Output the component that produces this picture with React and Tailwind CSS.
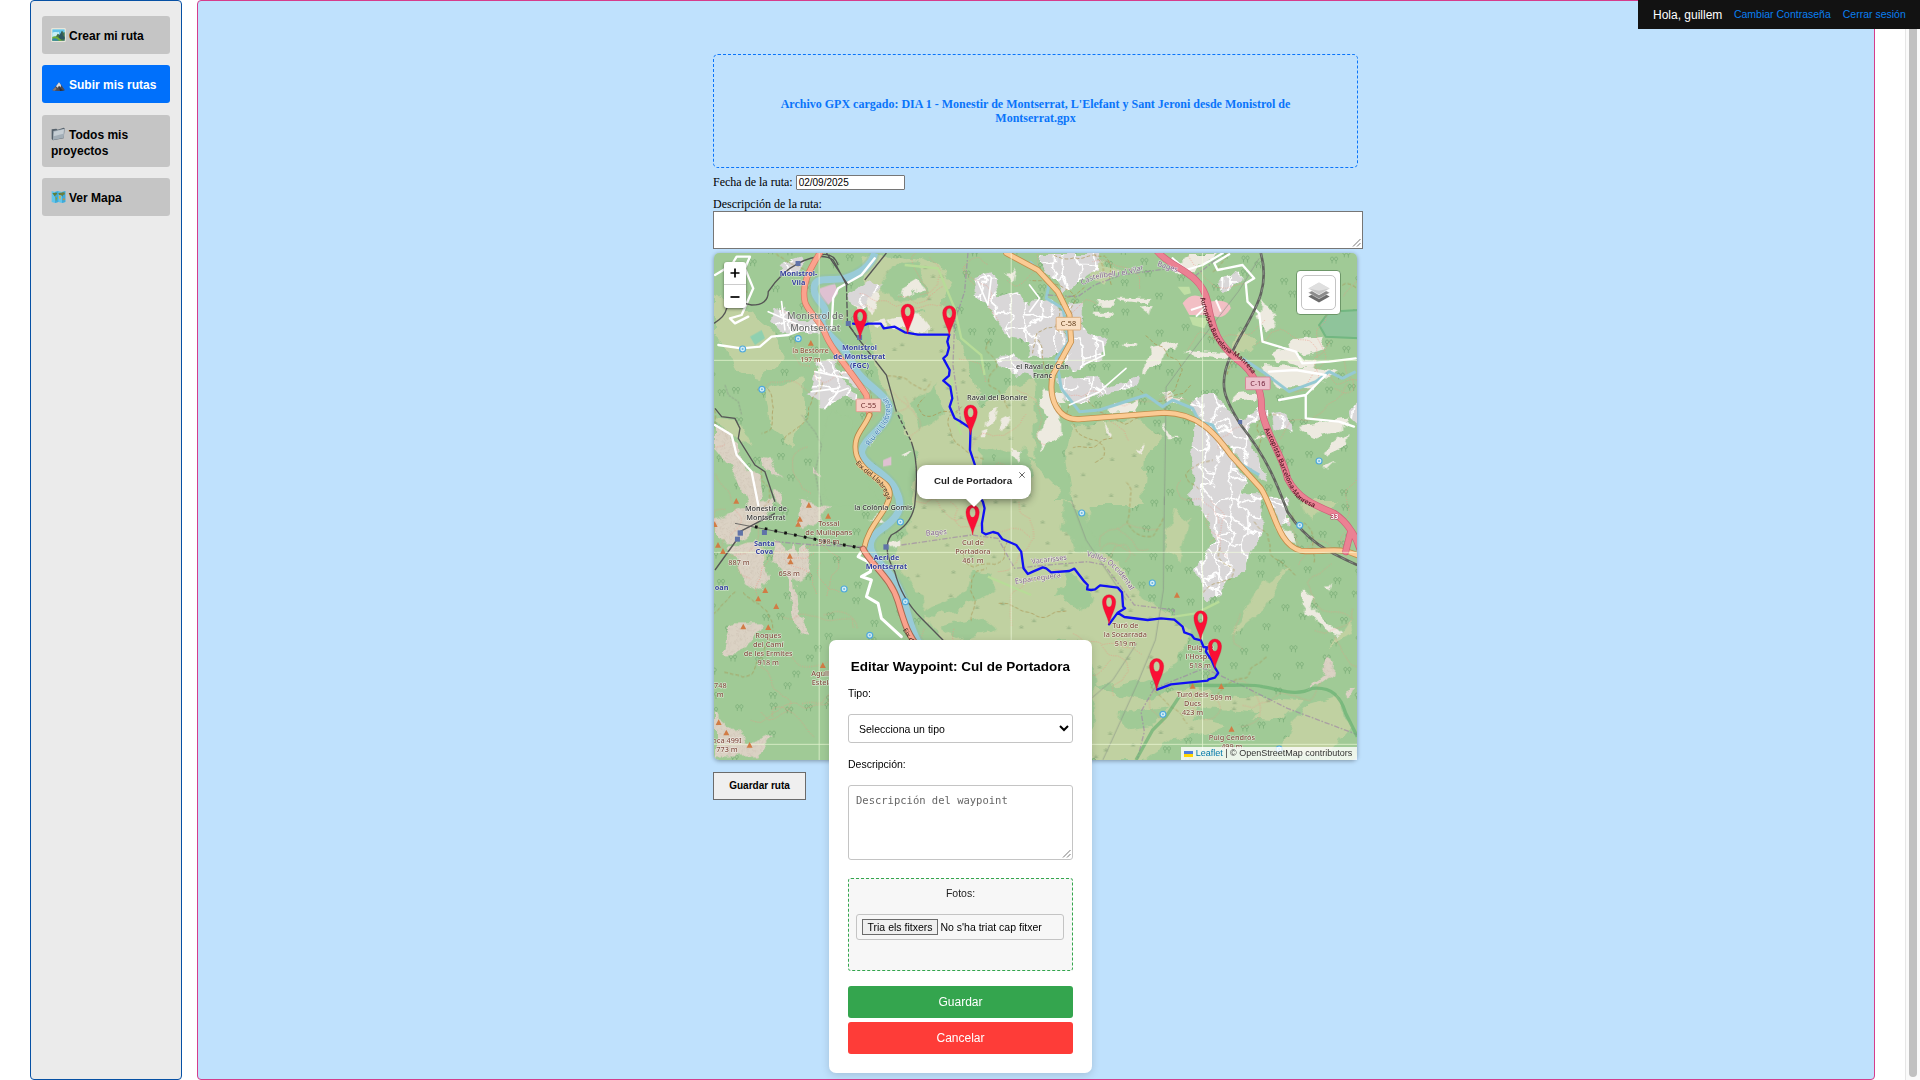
import React from "react";

const SANS = "font-['Liberation_Sans',Arial,sans-serif]";

/* ---------- sidebar icons ---------- */
const IconLandscape = () => (
  <svg width="15" height="14" viewBox="0 0 45 42" className="inline-block align-[-2px]">
    <rect x="1" y="1" width="43" height="40" rx="2" fill="#f4f1df" />
    <rect x="4" y="4" width="37" height="34" fill="#63c3ea" />
    <path d="M4 14 C12 9 18 15 24 11 L24 26 L4 26Z" fill="#c9eef5" />
    <path d="M12 30 L20 17 L27 21 L33 8 L38 14 L41 12 V38 H12Z" fill="#48724a" />
    <path d="M24 24 L33 9 L36 24 L41 26 V34 H22Z" fill="#2d5561" />
    <path d="M4 27 Q16 21 25 31 L33 38 H4Z" fill="#6fae37" />
    <path d="M4 32 Q16 28 24 38 H4Z" fill="#3487a9" />
  </svg>
);
const IconMountain = () => (
  <svg width="15" height="14" viewBox="0 0 45 42" className="inline-block align-[-3px]">
    <path d="M4 37 L13 26 L19 19 L24 13 L30 20 L35 27 L42 37 Q22 41 4 37Z" fill="#4c4b52" />
    <path d="M24 13 L30 21 L29 28 L24 23 L20 29 L15 25Z" fill="#d9dde3" />
    <path d="M4 37 L13 27 L17 33 L11 38Z" fill="#8a7770" />
    <path d="M24 26 L33 35 L40 37 L27 39Z" fill="#2e2d34" />
  </svg>
);
const IconFolder = () => (
  <svg width="15" height="14" viewBox="0 0 45 42" className="inline-block align-[-2px]">
    <path d="M2 7 L16 5 L20 8 L38 2 L41 4 L38 34 L6 40 L2 36Z" fill="#55616b" />
    <path d="M7 12 L41 5 L38 33 L6 39Z" fill="#a3aeb7" />
    <path d="M9 14 L39 7 L37 20 L8 28Z" fill="#c6ced4" />
  </svg>
);
const IconWorld = () => (
  <svg width="15" height="14" viewBox="0 0 45 42" className="inline-block align-[-2px]">
    <path d="M2 3 L12 6 L22 3 L33 6 L43 3 V36 L33 39 L22 36 L12 39 L2 36Z" fill="#5fc5ec" />
    <path d="M12 6 L22 3 V36 L12 39Z M33 6 L43 3 V36 L33 39Z" fill="#41a9d8" />
    <path d="M4 9 L17 8 L19 12 L14 15 L12 20 L8 15Z" fill="#607f3c" />
    <path d="M13 21 L19 23 L17 29 L15 34Z" fill="#86a23f" />
    <path d="M22 9 L40 7 L42 13 L36 15 L34 20 L31 16 L24 15Z" fill="#6d7e3b" />
    <path d="M23 17 L30 18 L28 29 L25 27Z" fill="#d6b04c" />
    <path d="M35 26 L41 25 L41 30 L36 31Z" fill="#c8923f" />
  </svg>
);

/* ---------- map helpers ---------- */
const B = "translate(975 0)";
const C = "translate(0 765)";
const D = "translate(975 765)";

const Road = ({ d, c = "#fff", e = "#999", w = 6, o = 9 }) => (
  <g fill="none" strokeLinejoin="round" strokeLinecap="round">
    <path d={d} stroke={e} strokeWidth={o} />
    <path d={d} stroke={c} strokeWidth={w} />
  </g>
);
const Label = ({ x, y, lines, s = 22, c = "#333", lh = 27, bold, halo = 3.5 }) => (
  <text
    textAnchor="middle" fontSize={s} fill={c} stroke="#ffffff99" strokeWidth={halo}
    paintOrder="stroke" strokeLinejoin="round" fontWeight={bold ? 700 : 500}
  >
    {lines.map((l, i) => (
      <tspan key={i} x={x} y={y + i * lh}>{l}</tspan>
    ))}
  </text>
);
const Peak = ({ x, y }) => <path d={`M${x - 9} ${y + 8} L${x} ${y - 9} L${x + 9} ${y + 8}Z`} fill="#d17c45" />;
const Spring = ({ x, y }) => (
  <g><circle cx={x} cy={y} r="9" fill="#d4ecf4" stroke="#4fa9dc" strokeWidth="3.5" /><circle cx={x} cy={y} r="3" fill="#6bb8de" /></g>
);
const Pin = ({ x, y, k = 1 }) => (
  <path
    transform={`translate(${x} ${y}) scale(${k})`} fillRule="evenodd" fill="#fb0f35" stroke="#d80d30" strokeWidth="1"
    d="M0 0 C-3 -24 -20 -46 -20 -69 A20 21 0 0 1 20 -69 C20 -46 3 -24 0 0Z M-9 -68 C-9 -58 -5 -53 0 -53 C5 -53 9 -58 9 -68 C9 -76 5 -82 0 -82 C-5 -82 -9 -76 -9 -68Z"
  />
);
const Shield = ({ x, y, t, fill, stroke, c }) => (
  <g>
    <rect x={x - 37} y={y - 19} width="74" height="38" rx="3" fill={fill} stroke={stroke} strokeWidth="2.5" />
    <text x={x} y={y + 8} textAnchor="middle" fontSize="22" fill={c}>{t}</text>
  </g>
);

function rng(seed) {
  let s = seed;
  return () => ((s = (s * 16807) % 2147483647) / 2147483647);
}

function makeTrails() {
  const r = rng(71);
  const out = [];
  for (let i = 0; i < 130; i++) {
    let x = 30 + r() * 1920, y = 30 + r() * 1500, a = r() * 6.28;
    let d = `M${x.toFixed(0)} ${y.toFixed(0)}`;
    const n = 4 + Math.floor(r() * 6);
    for (let k = 0; k < n; k++) {
      a += (r() - 0.5) * 1.9;
      const mx = x + Math.cos(a) * 15, my = y + Math.sin(a) * 15;
      a += (r() - 0.5) * 1.5;
      x = mx + Math.cos(a) * 17; y = my + Math.sin(a) * 17;
      d += ` Q${mx.toFixed(0)} ${my.toFixed(0)} ${x.toFixed(0)} ${y.toFixed(0)}`;
    }
    out.push({ d, k: i % 3 });
  }
  return out;
}

/* scatter points on a jittered grid and stamp a glyph on each */
function scatter(seed, step, keep, glyph) {
  const r = rng(seed);
  let d = "";
  for (let y = 50; y < 1550; y += step) {
    for (let x = 40; x < 1980; x += step) {
      const px = x + (r() - 0.5) * step * 0.9, py = y + (r() - 0.5) * step * 0.9;
      if (r() < keep) d += `M${px.toFixed(0)} ${py.toFixed(0)}${glyph}`;
    }
  }
  return d;
}

function makeStreets() {
  const r = rng(913);
  const W = 50, H = 34, sx = 41, sy = 47;
  const pt = [];
  for (let j = 0; j < H; j++) for (let i = 0; i < W; i++) pt.push([20 + i * sx + (r() - 0.5) * 30, 10 + j * sy + (r() - 0.5) * 34]);
  let d = "";
  const link = (a, b) => {
    const mx = (a[0] + b[0]) / 2 + (r() - 0.5) * 18, my = (a[1] + b[1]) / 2 + (r() - 0.5) * 18;
    d += `M${a[0].toFixed(0)} ${a[1].toFixed(0)}Q${mx.toFixed(0)} ${my.toFixed(0)} ${b[0].toFixed(0)} ${b[1].toFixed(0)}`;
  };
  for (let j = 0; j < H - 1; j++) for (let i = 0; i < W - 1; i++) {
    const p = j * W + i;
    if (r() < 0.55) link(pt[p], pt[p + 1]);
    if (r() < 0.8) link(pt[p], pt[p + W]);
    if (r() < 0.18) link(pt[p], pt[p + W + 1]);
  }
  return d;
}

const TRAILS = makeTrails();
const TREES = scatter(37, 68, 0.62, "v-8a4.5 5.5 0 1 1 .1 0m12 9v-9a4.5 5.5 0 1 1 .1 0");
const GRASS = scatter(51, 62, 0.6, "h13m-6.5 0v-9m0 9l-6 -6m6 6l6 -6");
const STREETS = makeStreets();

const FARM_A = "M490 150 L525 135 530 165 500 205 480 185Z M585 140 L640 108 655 125 600 160Z M545 225 L590 215 640 205 680 255 620 250 560 250Z M500 230 L540 220 540 245Z M845 500 L880 485 870 530 840 545Z M885 530 L915 515 900 560Z M590 630 L620 615 612 640Z M905 90 L930 60 920 110Z M920 605 L945 615 935 655 920 630Z M825 560 L845 555 850 580 830 580Z M440 170 L480 160 460 205Z M590 250 L660 250 640 262Z";
const FARM_B = "M195 170 L255 160 255 182 205 182Z M255 155 L365 155 360 175 280 165Z M330 185 L370 180 360 210Z M195 200 L250 200 250 212 205 212Z M280 290 L335 290 330 305 290 300Z M375 305 L455 290 440 310 400 325 390 355 340 395 350 340Z M470 315 L600 325 580 340 480 330Z M700 160 L745 240 710 260 690 215Z M725 330 L800 285 880 275 890 310 800 330 860 340 850 370 750 350Z M700 360 L850 370 920 385 850 430 740 430 720 390Z M615 450 L690 445 680 465 615 470Z M30 460 L80 455 90 560 40 620 30 560 50 520Z M220 495 L330 460 320 500 240 505Z M220 530 L245 560 240 575Z M395 540 L440 580 420 580Z M810 545 L960 520 930 560 860 580 820 560Z M880 620 L960 560 950 590 900 635Z M420 60 L480 30 560 30 500 80 430 75Z M320 610 L345 595 335 620Z M890 670 L930 650 900 680Z M675 575 L705 575 700 585Z M40 430 L100 450 95 480 50 470Z M390 450 L470 460 430 475Z";
const RES_A = "M215 60 L275 38 300 55 285 80 235 88Z M430 150 L490 105 525 130 470 190 430 170Z M205 195 L240 185 260 220 330 225 330 265 230 262 195 225Z M345 350 L385 345 435 440 490 470 410 460 360 495 350 465 310 450 335 385Z M810 100 L865 85 875 160 940 145 990 190 990 290 900 270 860 190 810 160Z M870 340 L930 320 990 380 990 400 920 385Z M400 380 L450 390 490 450 440 420Z";
const RES_B = "M25 24 L210 24 205 70 130 120 100 150 60 90Z M0 180 L60 165 105 200 115 300 60 345 0 340Z M115 175 L160 170 160 240 230 290 220 340 175 360 125 380 100 330 120 260Z M85 400 L200 400 250 420 330 400 320 435 220 440 180 480 100 470Z M495 450 L560 450 630 530 690 490 720 500 720 520 650 550 680 640 720 710 690 700 560 570 490 495Z M495 530 L540 560 650 690 640 740 690 785 490 785Z M555 115 L640 75 640 100 590 145Z M730 510 L760 500 795 570 740 550Z M960 490 L990 465 990 545 965 520Z";
const RES_D = "M480 -20 L690 -20 700 95 670 140 640 220 585 245 570 290 525 295 500 220 520 170 550 120 540 70Z M725 -10 L770 -10 775 70 750 80Z";
const RIVER = "M510 24 C500 60 470 85 420 100 C370 110 325 90 328 135 C330 175 385 185 350 225 C350 270 420 290 450 370 C480 420 535 440 552 480 C565 540 480 570 470 620 C470 660 560 690 575 740 C600 790 580 820 520 860 C470 900 510 940 550 980 C610 1050 600 1120 640 1190 L720 1260";

function TrailMap() {
  return (
    <svg className="block h-full w-full font-['Noto_Sans','Open_Sans',sans-serif]" viewBox="27 24 1932 1521" preserveAspectRatio="none">
      <defs>
        <pattern id="rock" width="22" height="20" patternUnits="userSpaceOnUse">
          <rect width="22" height="20" fill="#dbd2c4" />
          <path d="M3 4 l5 3 M13 11 l5 -3 M6 16 l4 1" stroke="#c6b9a9" strokeWidth="2" />
        </pattern>
        <filter id="rough" x="0" y="0" width="1990" height="1570" filterUnits="userSpaceOnUse">
          <feTurbulence type="fractalNoise" baseFrequency="0.022" numOctaves="3" seed="8" />
          <feDisplacementMap in="SourceGraphic" scale="38" xChannelSelector="R" yChannelSelector="G" />
        </filter>
        <clipPath id="built">
          <path d={RES_A} /><path d={RES_B} transform={B} /><path d={RES_D} transform={D} />
        </clipPath>
        <clipPath id="brush">
          <path d="M470 24 L620 40 700 60 740 110 700 210 640 200 560 300 500 280 470 150Z M500 280 L720 180 780 330 830 480 990 400 990 640 830 600 815 780 620 780 640 640 590 520 520 400Z" />
          <path d="M640 765 L990 765 990 1565 700 1185 630 1025 560 945 600 865Z M975 765 L1155 765 1145 865 1105 915 1225 935 1315 1065 1395 1105 1455 1165 1415 1265 1315 1305 1175 1325 1155 1185 975 1195Z M1165 1325 L1315 1365 1455 1325 1735 1365 1615 1415 1315 1545 1165 1545Z" />
          <path d="M1105 545 L1305 520 1375 580 1325 640 1315 780 1105 780 1085 640Z" />
        </clipPath>
        <path id="river-label" d="M495 605 C520 560 560 540 556 490 C553 460 540 440 522 430" />
        <path id="eix-label" d="M452 655 C490 700 530 705 548 765" />
        <path id="ap-label1" d="M1488 158 C1505 230 1530 300 1575 325 C1610 340 1630 365 1650 395" />
        <path id="ap-label2" d="M1680 553 C1720 620 1740 710 1775 755 C1790 775 1820 780 1850 800" />
        <path id="cast-label" d="M1135 122 C1180 85 1240 105 1320 72" />
        <path id="vall-label" d="M1146 933 C1205 945 1235 965 1280 1040" />
      </defs>

      <rect width="1990" height="1570" fill="#a0ca96" />
      <path d={TREES} fill="none" stroke="#76a974" strokeWidth="2" />
      <g fill="#c0d1a1" filter="url(#rough)">
        <path d="M470 24 L620 40 700 60 740 110 700 210 640 200 560 300 500 280 470 150Z M500 280 L720 180 780 330 830 480 990 400 990 640 830 600 815 780 620 780 640 640 590 520 520 400Z" />
        <path d="M30 150 L110 190 200 260 240 340 170 400 90 380 60 290 30 270Z M180 430 L290 400 300 520 260 600 200 560Z M30 510 L100 520 140 600 60 560Z" />
        <path transform={B} d="M130 545 L330 520 400 580 350 640 340 780 130 780 110 640Z M190 40 L270 70 230 120 180 100Z M600 320 L640 250 680 300 650 330Z M0 640 L100 740 60 780 0 780Z" />
        <path transform={C} d="M640 -10 L990 -10 990 800 700 420 630 260 560 180 600 100Z M120 120 L180 150 160 230 110 180Z" />
        <path transform={D} d="M0 0 L180 0 170 100 130 150 250 170 340 300 420 340 480 400 440 500 340 540 200 560 180 420 0 430Z M190 560 L340 600 480 560 620 590 820 600 760 660 640 650 540 700 430 720 340 780 190 780Z M440 30 L480 60 450 180 400 150Z M600 410 L700 250 780 200 700 330Z M820 620 L930 590 960 680 880 780 760 740Z M900 440 L960 360 970 400Z M820 0 L930 0 850 60Z" />
      </g>
      <path d={GRASS} fill="none" stroke="#95b083" strokeWidth="2" clipPath="url(#brush)" />
      <g fill="#a0ca96" filter="url(#rough)">
        <path d="M560 60 L640 50 670 150 590 170 520 130Z M620 470 L700 420 720 500 650 560Z M870 640 L960 600 990 700 900 760Z M380 500 L440 520 440 610 520 780 380 780 330 650Z" />
        <path transform={C} d="M650 340 C720 280 800 310 800 210 L850 220 880 270 780 320 690 350Z M700 380 L830 350 880 390 760 420Z" />
        <path transform={D} d="M110 0 L170 50 200 150 140 140 100 80Z M120 210 L200 300 160 330 80 290Z M260 640 L420 615 380 680 300 690Z M500 620 L700 640 600 680 500 660Z" />
      </g>

      <g fill="#edeae0" filter="url(#rough)"><path d={FARM_A} /><path d={FARM_B} transform={B} />
        <path transform={C} d="M545 125 L590 118 590 140 550 145Z M500 60 L530 40 540 80Z" />
        <path transform={D} d="M825 270 L850 290 840 320 930 400 920 415 860 370 820 310Z M890 260 L915 258 910 275Z M740 80 L790 90 800 130 760 120Z" />
      </g>
      <g filter="url(#rough)">
        <g clipPath="url(#built)">
          <rect width="1990" height="1570" fill="#d9d7d8" />
          <path d={STREETS} fill="none" stroke="#fff" strokeWidth="5" />
        </g>
      </g>
      <g fill="url(#rock)" filter="url(#rough)">
        <path d="M30 535 L60 560 100 600 110 650 160 700 170 780 130 780 100 700 60 650 30 610Z M165 635 L195 640 230 700 200 690Z M205 735 L240 740 230 780 205 770Z M330 660 L350 700 330 690Z" />
        <path transform={C} d="M30 60 L110 20 200 0 180 60 120 110 70 130 30 120Z M70 140 L150 120 190 230 170 270 120 240Z M210 120 L250 150 260 120 280 170 300 130 320 160 310 220 270 240 280 330 310 400 290 410 255 340 260 240 200 180Z M80 370 L170 370 140 430 90 460 55 460Z M30 640 L90 690 130 730 210 700 150 770 30 770Z M290 0 L370 20 340 60 280 80Z" />
        <path transform={D} d="M890 465 L915 480 910 520 860 560 830 570 880 530Z M950 580 L980 565 980 580 955 590Z" />
      </g>
      <g fill="#f2bfc4" transform={B}><path d="M460 175 Q490 130 540 170 Q600 160 605 190 Q580 230 550 210 L480 210Z" /><path d="M485 195 l60 -20 M500 215 l40 -40 M560 165 l15 35" stroke="#fff" strokeWidth="6" /></g>
      <g fill="#c0dfa5" transform={B}><path d="M445 125 L480 125 485 145 465 150Z M480 215 L540 220 525 250 490 240Z" /></g>
      <path transform={B} d="M990 195 L900 200 870 240 890 275 990 280" fill="#8fc49b" stroke="#72b781" strokeWidth="6" />
      <g fill="#dfc1d2"><path d="M345 130 L390 115 400 145 370 180 345 160Z M535 645 L560 635 560 660 535 665Z" /></g>
      <path d="M135 275 L170 255 180 280 150 300Z" fill="#8fd0b0" />

      {/* footpaths and tracks */}
      <g fill="none">
        {TRAILS.map((t, i) => (
          <path key={i} d={t.d} stroke={t.k === 0 ? "#ab9150" : "#ee9685"} strokeWidth="2.4" strokeDasharray={t.k === 0 ? "11 6" : "3 4"} opacity=".85" />
        ))}
        <g stroke="#8a9488" strokeWidth="2">
          <path transform={B} d="M690 40 L627 140 530 265 460 358 410 426 408 600 405 780" />
          <path transform={D} d="M405 -10 L402 270 378 420 322 555 250 715 220 780 M125 0 L170 120 290 300 M322 430 L250 540 180 600" />
          <path d="M60 420 L70 450 100 470 110 510 M290 510 L330 560 350 600 330 680 350 780" strokeDasharray="8 3" />
        </g>
      </g>

      {/* water */}
      <path d={RIVER} fill="none" stroke="#8fbfae" strokeWidth="32" opacity=".45" />
      <path d={RIVER} fill="none" stroke="#99cbd8" strokeWidth="21" strokeLinejoin="round" />
      <path transform={B} d="M0 50 L60 110 50 160 100 190 118 290 80 340 95 430 150 500 210 495 350 450 400 485 430 465 490 490 510 530 550 540 580 600 640 660 690 690 M640 340 L700 380 740 410 780 440 860 410 900 380 940 400 980 380" fill="none" stroke="#95c9d3" strokeWidth="9" strokeLinejoin="round" />

      {/* boundaries */}
      <g fill="none" stroke="#9b7fa5" strokeWidth="4" strokeDasharray="16 5 5 5" opacity=".6">
        <path d="M790 24 L780 140 750 230 745 360 770 540" />
        <path d="M1030 150 L1120 155 1170 120 1250 90 1400 70 1470 95 1540 40" />
        <path d="M210 890 L330 900 470 905 M590 900 L800 870 880 880 930 970 1030 960 1150 950 1200 960 1290 1080 1410 1095 1410 1120 M1350 1330 L1500 1270 1610 1320 1750 1390 1990 1480 M1350 1330 L1310 1400 1320 1460 1300 1540" />
      </g>
      <g fill="none" stroke="#65b071" strokeWidth="10" opacity=".65">
        <path transform={D} d="M480 555 C600 560 670 550 700 560 C760 570 800 590 850 565 C910 560 935 590 950 640 L985 710 M450 590 L410 650 370 690 320 780" />
      </g>
      <path d="M600 60 L700 70 750 190 770 280 830 330 840 390 M740 400 L750 510 770 570 M850 995 L980 1050" fill="none" stroke="#b7dc98" strokeWidth="7" />
      <path transform={D} d="M400 355 L500 340 570 305" fill="none" stroke="#b7dc98" strokeWidth="7" />

      {/* minor roads */}
      <g fill="none" stroke="#fff" strokeWidth="7" strokeLinejoin="round" strokeLinecap="round">
        <path d="M30 90 L80 60 95 35 135 35 120 70 145 130 110 210 75 220 90 235 130 215 M40 300 L110 310 165 305 200 275 250 270 345 235 M380 250 L385 160 400 130 470 90 510 40 M30 540 L80 570 95 630 140 680 160 780" />
        <path transform={C} d="M470 155 L460 170 500 190 497 215 470 230 500 240 485 290 520 310 530 355 590 410" strokeWidth="9" />
        <path transform={B} d="M430 40 L470 75 520 60 580 25 M640 60 L565 75 555 55 600 28 M640 60 L675 100 650 115 655 170 690 205 700 290 800 320 820 355 900 350 980 340 M720 380 L800 375 890 390 830 450 750 465 M830 450 L830 520 930 530 975 545" />
        <path transform={B} d="M0 120 L30 160 0 200 M190 280 L220 290 225 330 160 360 M120 480 L210 440 290 370" strokeWidth="5" />
        <path d="M190 200 L330 260 M230 170 L240 255 M330 380 L430 400 M320 440 L400 430 M360 490 L400 440 430 430 M820 110 L850 180 860 100" strokeWidth="5" />
      </g>

      {/* rail */}
      <g fill="none" stroke="#555" strokeWidth="4">
        <path d="M27 235 Q60 215 65 190 Q90 165 140 180 Q190 180 190 140 Q230 80 280 55 Q350 20 385 45 Q400 70 425 120 M365 24 L430 120 M345 30 Q385 20 400 60" />
        <path d="M425 120 L428 235 460 280" strokeDasharray="20 5" />
        <path d="M428 235 L460 280 510 345 545 390 575 500" />
        <path d="M580 510 L620 590" strokeDasharray="12 6" />
        <path d="M620 590 Q645 660 630 780 Q620 840 560 870 Q530 910 570 980 Q590 1060 650 1120 L720 1190" />
        <path d="M30 490 L50 515 90 520 105 550 100 580 150 660 180 680 210 770" />
        <path d="M545 24 L480 105" />
        <path transform={C} d="M30 210 L95 120 M105 95 L210 40" />
      </g>
      <g fill="none">
        <path d="M1670 24 C1705 150 1630 220 1580 330 C1540 420 1560 460 1610 540 C1690 640 1720 720 1750 800 C1810 890 1870 920 1960 960" stroke="#62645f" strokeWidth="8" />
        <path d="M1670 24 C1705 150 1630 220 1580 330 C1540 420 1560 460 1610 540 C1690 640 1720 720 1750 800 C1810 890 1870 920 1960 960" stroke="#9aa69a" strokeWidth="2" strokeDasharray="14 12" />
        <path d="M90 835 L270 870 390 895 475 910" stroke="#555" strokeWidth="2.5" /><path d="M150 845 L270 870 390 895 475 910" stroke="#111" strokeWidth="9" strokeDasharray="8 22" />
      </g>

      {/* main roads */}
      <Road d="M345 24 C310 80 290 120 300 170 C310 205 345 220 365 275 C385 320 440 380 485 450 L494 510" c="#fba28d" e="#d0775f" w={15} o={19} />
      <Road d="M494 510 C480 550 440 570 455 630 C480 700 560 700 555 750 C550 800 490 840 478 910" c="#f9c98f" e="#b38546" w={12} o={17} />
      <Road d="M475 912 C500 960 560 1000 580 1070 C600 1140 610 1170 650 1220" c="#fba28d" e="#a66b52" w={14} o={20} />
      <Road d="M905 24 L1000 75 1060 140 1095 210 1100 290 1045 390 C1030 460 1060 530 1130 522 L1380 503 C1480 505 1530 560 1580 630 L1670 730 C1710 790 1720 900 1790 917 C1860 925 1900 900 1970 935" c="#fbcb94" e="#c18d4a" w={13} o={18} />
      <Road d="M1360 20 C1400 70 1490 80 1510 170 C1525 260 1545 300 1600 345 C1650 380 1675 440 1672 490 C1680 560 1740 640 1750 700 C1780 760 1830 780 1890 805 C1930 830 1960 880 1970 920 M1940 860 L1925 920" c="#eb8193" e="#ce6079" w={17} o={21} />

      {/* tile seams */}
      <path d="M343 24 V1545 M920 24 V1545 M1495 24 V1545 M27 346 H1960 M27 922 H1960 M27 1498 H1960" stroke="#f4ffe0" strokeWidth="2.5" opacity=".75" />

      {/* labels */}
      <g fill="#6073a8">
        <rect x="272" y="48" width="15" height="15" /><rect x="423" y="228" width="15" height="15" /><rect x="457" y="270" width="15" height="15" />
        <rect x="98" y="856" width="16" height="16" /><rect x="90" y="875" width="15" height="15" /><rect x="171" y="855" width="15" height="15" /><rect x="536" y="898" width="16" height="16" />
        <rect x="1602" y="525" width="12" height="12" />
      </g>
      <Label x={281} y={92} lines={["Monistrol-", "Vila"]} s={22} c="#36419e" bold />
      <Label x={331} y={221} lines={["Monistrol de", "Montserrat"]} s={28} lh={37} c="#6c6c6c" />
      <Label x={464} y={315} lines={["Monistrol", "de Montserrat", "(FGC)"]} s={22} c="#36419e" bold />
      <Label x={317} y={324} lines={["la Bestorre", "197 m"]} c="#8e5238" s={21} />
      <Label x={878} y={466} lines={["Raval del Bonaire"]} />
      <Label x={1014} y={371} lines={["el Raval de Can", "Franc"]} lh={28} />
      <Label x={183} y={797} lines={["Monestir de", "Montserrat"]} />
      <Label x={178} y={902} lines={["Santa"]} c="#36419e" bold /><Label x={178} y={927} lines={["Cova"]} c="#36419e" bold />
      <Label x={50} y={1035} lines={["oan"]} c="#36419e" bold />
      <Label x={372} y={844} lines={["Tossal", "de Mullapans", "508 m"]} c="#835041" />
      <Label x={102} y={960} lines={["887 m"]} c="#835041" /><Label x={253} y={992} lines={["658 m"]} c="#835041" />
      <Label x={536} y={794} lines={["la Colònia Gomis"]} />
      <Label x={545} y={944} lines={["Aeri de", "Montserrat"]} c="#36419e" bold />
      <Label x={805} y={900} lines={["Cul de", "Portadora", "461 m"]} c="#835041" />
      <Label x={190} y={1179} lines={["Roques", "del Camí", "de les Ermites", "918 m"]} c="#835041" />
      <Label x={352} y={1293} lines={["Agulla", "Estela"]} c="#835041" />
      <Label x={46} y={1328} lines={["748", "m"]} c="#835041" /><Label x={66} y={1495} lines={["oca 499I", "773 m"]} c="#835041" />
      <Label x={1263} y={1149} lines={["Turó de", "la Socarrada", "519 m"]} c="#835041" />
      <Label x={1488} y={1216} lines={["Puig de", "l'Hospici", "518 m"]} c="#835041" />
      <Label x={1465} y={1355} lines={["Turó dels", "Ducs", "423 m"]} c="#835041" /><Label x={1550} y={1365} lines={["509 m"]} c="#835041" />
      <Label x={1583} y={1485} lines={["Puig Cendrós", "499 m"]} c="#835041" />
      <g fontSize="22" fill="#84648f" stroke="#ffffff90" strokeWidth="3" style={{ paintOrder: "stroke" }}>
        <text transform="translate(664 872) rotate(-5)">Bages</text>
        <text transform="translate(1358 62) rotate(18)">Bages</text>
        <text><textPath href="#cast-label">Castellbell i el Vilar</textPath></text>
        <text transform="translate(982 957) rotate(-7)">Vacarisses</text>
        <text transform="translate(932 1016) rotate(-8)">Esparreguera</text>
        <text><textPath href="#vall-label">Vallès Occidental</textPath></text>
      </g>
      <text fontSize="23" fill="#4580b4" stroke="#ffffff90" strokeWidth="3" paintOrder="stroke"><textPath href="#river-label">Riu el Llobregat</textPath></text>
      <text fontSize="20" fill="#3b3025" stroke="#f9c98f" strokeWidth="3" paintOrder="stroke"><textPath href="#eix-label">Eix del Llobregat</textPath></text>
      <text fontSize="20" fill="#3b3025" transform="translate(594 1155) rotate(58)">Eix del</text>
      <g fontSize="20" fontWeight="600" fill="#5b1d2a"><text><textPath href="#ap-label1">Autopista Barcelona-Manresa</textPath></text><text><textPath href="#ap-label2">Autopista Barcelona-Manresa</textPath></text></g>
      <text x="1880" y="823" fontSize="20" fontWeight="700" fill="#fff" stroke="#b84d67" strokeWidth="3" paintOrder="stroke">33</text>
      <Shield x={491} y={481} t="C-55" fill="#f8cfc6" stroke="#e5968a" c="#6b2b2b" />
      <Shield x={1092} y={236} t="C-58" fill="#f8dfc4" stroke="#dba873" c="#5e3a16" />
      <Shield x={1661} y={415} t="C-16" fill="#ecc0cb" stroke="#d87d92" c="#6b1a33" />
      {[[318, 294], [94, 768], [312, 780], [285, 822], [280, 837], [370, 813], [255, 933], [257, 950], [181, 1036], [160, 1061], [214, 1084], [115, 1145], [190, 1147], [354, 1261], [41, 1432], [64, 1463], [134, 1500], [29, 838], [39, 900], [54, 919], [1418, 1050], [1465, 1323], [1551, 1324], [1582, 1452]].map(([x, y]) => <Peak key={x + "-" + y} x={x} y={y} />)}
      {[[280, 281], [113, 312], [171, 433], [587, 831], [418, 1032], [602, 1070], [495, 1171], [1132, 804], [1344, 1014], [1787, 841], [1845, 648], [1376, 1408], [1725, 1512]].map(([x, y]) => <Spring key={x + "-" + y} x={x} y={y} />)}

      {/* recorded track */}
      <path
        fill="none" stroke="#1010f4" strokeWidth="7" strokeLinejoin="round" strokeLinecap="round"
        d="M445 236 L480 240 490 236 528 236 537 250 570 245 600 262 640 269 734 269 728 290 733 308 727 330 716 340 735 375 733 392 716 407 737 425 743 460 735 485 750 520 765 528 798 550 796 615 811 660 812 740 835 770 840 790 832 835 833 862 843 868 865 861 880 865 893 882 935 900 950 920 957 970 970 987 985 980 1015 967 1025 970 1040 982 1095 978 1110 971 1140 1010 1150 1020 1148 1033 1160 1035 1172 1033 1187 1021 1240 1028 1253 1042 1256 1085 1262 1090 1240 1103 1214 1138 1240 1103 1260 1116 1330 1125 1370 1120 1410 1124 1435 1145 1440 1162 1462 1170 1470 1181 1490 1186 1498 1206 1508 1207 1505 1220 1522 1245 1532 1268 1542 1284 1532 1298 1513 1303 1510 1307 1400 1318 1358 1334"
      />
      <Pin x={466} y={282} /><Pin x={609} y={267} /><Pin x={734} y={272} /><Pin x={798} y={570} /><Pin x={804} y={870} />
      <Pin x={1214} y={1139} /><Pin x={1489} y={1187} /><Pin x={1532} y={1272} /><Pin x={1357} y={1336} k={1.06} />
    </svg>
  );
}

function NavItem({ icon, children, active, cls }) {
  return (
    <button className={`${cls} w-full rounded-[3px] pl-[9px] pr-2 text-left text-xs font-bold leading-4 ${active ? "bg-[#0070fb] text-white" : "bg-[#c5c5c5] text-black"}`}>
      {icon}<span className="ml-[3px]">{children}</span>
    </button>
  );
}

const Grip = () => (
  <svg width="9" height="9" viewBox="0 0 9 9" className="absolute bottom-px right-px"><path d="M1 8.5 L8.5 1 M5 8.5 L8.5 5" stroke="#777" strokeWidth="1" /></svg>
);

export default function App() {
  return (
    <div className={`relative flex h-[1080px] w-[1920px] overflow-hidden bg-white text-black ${SANS}`}>
      <nav className="ml-[30px] flex w-[152px] shrink-0 flex-col rounded-[4px] border border-[#0650a4] bg-[#ebebeb] px-[11px] pt-[15px]">
        <NavItem icon={<IconLandscape />} cls="h-[38px] mb-[11px] pt-[2px]">Crear mi ruta</NavItem>
        <NavItem icon={<IconMountain />} cls="h-[38px] mb-3 pt-[2px]" active>Subir mis rutas</NavItem>
        <NavItem icon={<IconFolder />} cls="h-[52px] mb-[11px] pt-[4px]">Todos mis proyectos</NavItem>
        <NavItem icon={<IconWorld />} cls="h-[38px] pt-[2px]">Ver Mapa</NavItem>
      </nav>

      <main className="ml-[15px] w-[1678px] shrink-0 rounded-[4px] border border-[#d63c8b] bg-[#bfe1fd] pl-[515px] pt-[53px] font-['Liberation_Serif','Times_New_Roman',serif] text-xs leading-[14px]">
        <div className="flex h-[114px] w-[645px] items-center justify-center rounded-[5px] border border-dashed border-[#0a74fa] px-14 text-center font-bold text-[#0a74fa]">
          <p>Archivo GPX cargado: DIA 1 - Monestir de Montserrat, L'Elefant y Sant Jeroni desde Monistrol de<br />Montserrat.gpx</p>
        </div>
        <div className="mt-[7px] flex h-4 items-start">
          <label>Fecha de la ruta:</label>
          <div className={`ml-[3px] h-[15px] w-[109px] rounded-[1px] border border-[#767676] bg-white pl-0.5 text-[10px] ${SANS}`}>02/09/2025</div>
        </div>
        <label className="mt-[6px] block h-[14px]">Descripción de la ruta:</label>
        <div className="relative w-[650px] h-[38px] border border-[#767676] bg-white"><Grip /></div>

        <section className={`relative mt-1 ml-px h-[507px] w-[643px] rounded-[5px] shadow-[0_1px_4px_rgba(0,0,0,0.35)] ${SANS}`}>
          <div className="h-full overflow-hidden rounded-[5px]"><TrailMap /></div>
          <div className="absolute left-[10px] top-[9px] flex w-[22px] flex-col rounded-[3px] bg-white shadow-[0_1px_3px_rgba(0,0,0,0.5)]">
            <button className="flex h-[23px] items-center justify-center border-b border-[#ccc]" aria-label="+"><svg width="10" height="10" viewBox="0 0 10 10"><path d="M0.5 5 H9.5 M5 0.5 V9.5" stroke="#000" strokeWidth="1.7" /></svg></button>
            <button className="flex h-[23px] items-center justify-center" aria-label="−"><svg width="10" height="10" viewBox="0 0 10 10"><path d="M0.5 5 H9.5" stroke="#000" strokeWidth="1.7" /></svg></button>
          </div>
          <div className="absolute left-[582px] top-[17px] flex h-[45px] w-[45px] items-center justify-center rounded-[4px] border border-[#6d9768] bg-white">
            <div className="flex h-[35px] w-[35px] items-center justify-center rounded-[5px] border border-[#c4c4c4] bg-white">
              <svg width="22" height="21" viewBox="0 0 66 62">
                <path d="M1 43 L12 37 L33 49 L54 37 L65 43 L33 61Z" fill="#6b6b6b" />
                <path d="M1 32 L12 26 L33 38 L54 26 L65 32 L33 50Z" fill="#8b8b8b" stroke="#fff" strokeWidth="1" />
                <path d="M33 1 L65 19 L33 38 L1 19Z" fill="#c9c9c9" stroke="#fff" strokeWidth="1" />
                <path d="M33 1 L65 19 L33 26 L1 19Z" fill="#dfdfdf" />
              </svg>
            </div>
          </div>
          <div className="absolute left-[203px] top-[212px] h-[34px] w-[114px] drop-shadow-[0_2px_4px_rgba(0,0,0,0.45)]">
            <svg className="absolute left-[48px] top-[33px]" width="18" height="9" viewBox="0 0 18 9"><path d="M0 0 H18 L9.5 8.5 Q9 9 8.5 8.5Z" fill="#fff" /></svg>
            <div className="relative flex h-full items-center justify-center rounded-[9px] bg-white pb-[2px] pr-[2px] text-[9.7px] font-bold leading-none text-[#222]">Cul de Portadora
              <svg className="absolute right-[6px] top-[7px]" width="6" height="6" viewBox="0 0 6 6"><path d="M0.3 0.3 L5.7 5.7 M5.7 0.3 L0.3 5.7" stroke="#666" /></svg>
            </div>
          </div>
          <div className="absolute bottom-0 right-0 flex h-[13px] w-[176px] items-center justify-center whitespace-nowrap bg-white/80 pr-[2px] text-[9px] leading-none text-[#333]">
            <svg width="9" height="6" viewBox="0 0 9 6" className="mr-[3px]"><path d="M0 0h9v3H0z" fill="#4c7be1" /><path d="M0 3h9v3H0z" fill="#ffd500" /></svg>
            <a className="text-[#0078a8]">Leaflet</a>&nbsp;| © OpenStreetMap contributors
          </div>
        </section>

        <button className={`mt-3 flex h-7 w-[93px] items-center justify-center border border-[#6b6b6b] bg-[#efefef] text-[10px] font-bold ${SANS}`}>Guardar ruta</button>
      </main>

      <div className="ml-auto flex w-[15px] justify-center border-l border-[#e6e6e6] bg-[#fafafa]"><div className="h-[1077px] w-2 rounded-b-full bg-[#c1c1c1]" /></div>

      <header className="absolute right-0 top-0 flex h-[29px] w-[282px] items-center whitespace-nowrap bg-[#121212] pl-[15px] pt-px text-[10.5px] text-[#0a7ff0]">
        <span className="text-xs text-white">Hola, guillem</span>
        <a className="ml-[11.5px]">Cambiar Contraseña</a>
        <a className="ml-[12px]">Cerrar sesión</a>
      </header>

      <form className="absolute left-[829px] top-[640px] flex h-[433px] w-[263px] flex-col rounded-[7px] bg-white px-[19px] pt-[19px] text-[10.5px] leading-3 shadow-[0_2px_8px_rgba(0,0,0,0.15)]">
        <h3 className="-mx-1 h-4 text-center text-[13.5px] font-bold leading-4 whitespace-nowrap">Editar Waypoint: Cul de Portadora</h3>
        <label className="mt-3 h-3">Tipo:</label>
        <div className="mt-[15px] flex h-[29px] items-center justify-between rounded-[3px] border border-[#c4c4c4] pl-[10px] pr-[3px]">
          <span className="pt-px">Selecciona un tipo</span>
          <svg width="10" height="7" viewBox="0 0 10 7"><path d="M1 1 L5 5 L9 1" fill="none" stroke="#000" strokeWidth="2" /></svg>
        </div>
        <label className="mt-[15px] h-3">Descripción:</label>
        <div className="relative mt-[15px] h-[75px] rounded-[3px] border border-[#c4c4c4] px-[7px] pt-2 font-['DejaVu_Sans_Mono',monospace] text-[#666]">Descripción del waypoint<Grip /></div>
        <div className="mt-[18px] flex h-[93px] flex-col rounded-[3px] border border-dashed border-[#33a64d] bg-[#f7f7f7] px-[7px] pt-2">
          <label className="text-center text-[#222]">Fotos:</label>
          <div className="mt-[15px] flex h-[26px] w-[208px] items-center rounded-[3px] border border-[#c4c4c4] pl-[5px] whitespace-nowrap">
            <span className="flex h-4 w-[76px] items-center justify-center border border-[#6b6b6b] bg-[#efefef]">Tria els fitxers</span>
            <span className="ml-[2.5px]">No s'ha triat cap fitxer</span>
          </div>
        </div>
        <button className="mt-[15px] h-8 rounded-[3px] bg-[#34a54e] text-xs text-white">Guardar</button>
        <button className="mt-1 h-8 rounded-[3px] bg-[#fe3c38] text-xs text-white">Cancelar</button>
      </form>
    </div>
  );
}
